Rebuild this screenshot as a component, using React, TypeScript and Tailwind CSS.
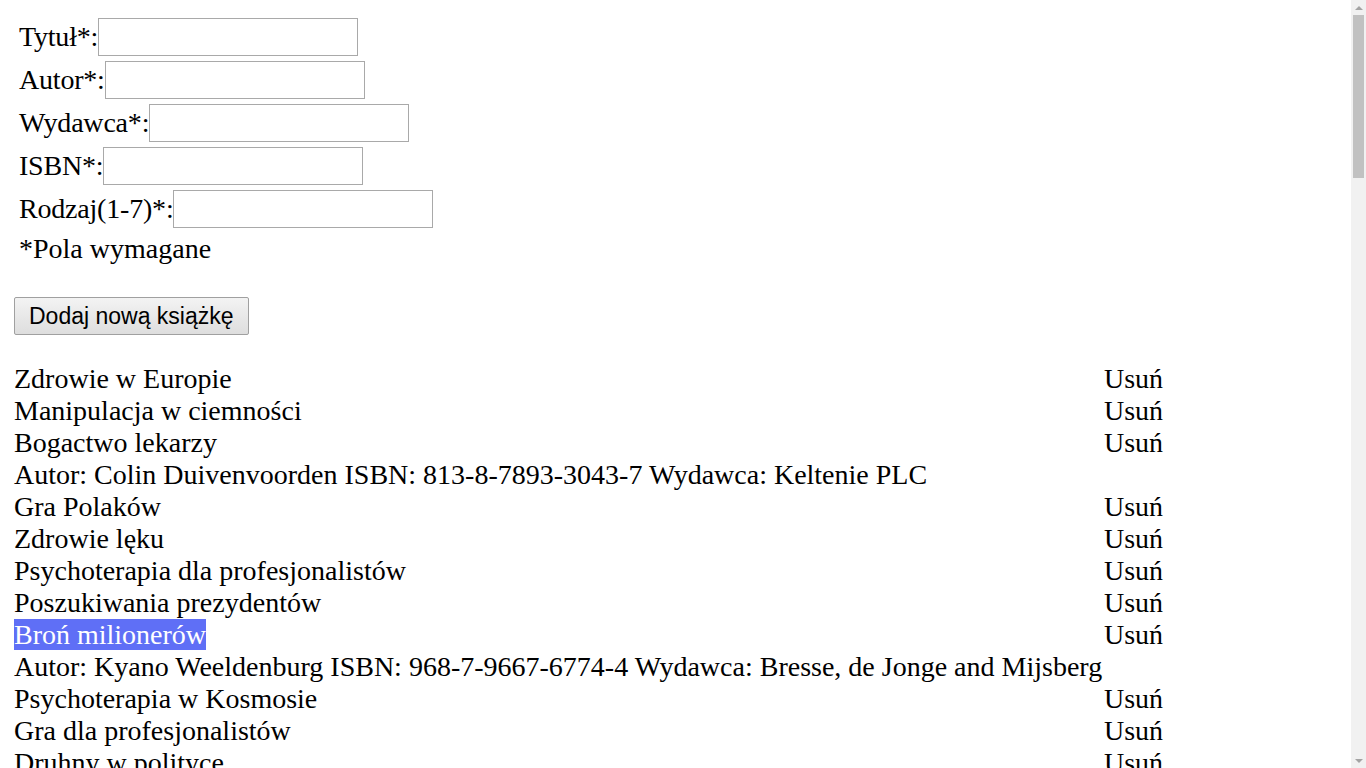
import React from "react";

type Row = { title: string; details?: string; selected?: boolean };

const rows: Row[] = [
  { title: "Zdrowie w Europie" },
  { title: "Manipulacja w ciemności" },
  { title: "Bogactwo lekarzy", details: "Autor: Colin Duivenvoorden ISBN: 813-8-7893-3043-7 Wydawca: Keltenie PLC" },
  { title: "Gra Polaków" },
  { title: "Zdrowie lęku" },
  { title: "Psychoterapia dla profesjonalistów" },
  { title: "Poszukiwania prezydentów" },
  { title: "Broń milionerów", selected: true, details: "Autor: Kyano Weeldenburg ISBN: 968-7-9667-6774-4 Wydawca: Bresse, de Jonge and Mijsberg" },
  { title: "Psychoterapia w Kosmosie" },
  { title: "Gra dla profesjonalistów" },
  { title: "Druhny w polityce" },
];

const extra = [
  "Sekrety lekarzy", "Historia Europy", "Manipulacja dla początkujących", "Zdrowie w Kosmosie",
  "Gra w ciemności", "Bogactwo Polaków", "Broń prezydentów", "Poszukiwania lęku",
  "Psychoterapia milionerów", "Druhny w Europie", "Tajemnice polityki", "Zdrowie dla profesjonalistów",
  "Manipulacja lekarzy", "Gra milionerów", "Bogactwo w Kosmosie", "Poszukiwania w ciemności",
  "Broń Polaków", "Historia lęku", "Sekrety prezydentów", "Druhny dla początkujących",
];

for (let i = 0; i < 85; i++) rows.push({ title: extra[i % extra.length] });

function Field({ label }: { label: string }) {
  return (
    <div className="flex h-[38px] items-center">
      <span className="tracking-[-0.2px]">{label}</span>
      <input className="h-[38px] w-[260px] border border-[#a9a9a9] bg-white outline-none" />
    </div>
  );
}

export default function App() {
  return (
    <div
      className="bg-white text-black text-[28px] leading-[32px] pr-[15px]"
      style={{ fontFamily: '"Liberation Serif", "Times New Roman", serif' }}
    >
      <div className="pl-[19px] pt-[18px] flex flex-col gap-[5px]">
        <Field label="Tytuł*:" />
        <Field label="Autor*:" />
        <Field label="Wydawca*:" />
        <Field label="ISBN*:" />
        <Field label="Rodzaj(1-7)*:" />
        <div>*Pola wymagane</div>
      </div>
      <div className="pl-[14px] pt-[32px]">
        <button
          className="h-[38px] px-[14px] border border-[#a0a0a0] rounded-[2px] bg-gradient-to-b from-[#f3f3f3] to-[#dedede] text-[23px] leading-none text-black"
          style={{ fontFamily: '"Liberation Sans", Arial, sans-serif' }}
        >
          Dodaj nową książkę
        </button>
      </div>
      <div className="pl-[14px] pt-[28px] pb-[8px] grid grid-cols-[1090px_auto]">
        {rows.map((r, i) => (
          <React.Fragment key={i}>
            <div className="whitespace-nowrap">
              {r.selected ? <span className="bg-[#5f6ff6] text-white">{r.title}</span> : r.title}
            </div>
            <div>Usuń</div>
            {r.details && (
              <>
                <div className="whitespace-nowrap">{r.details}</div>
                <div></div>
              </>
            )}
          </React.Fragment>
        ))}
      </div>
      <div className="fixed right-0 top-0 h-screen w-[15px] bg-[#f1f1f1] flex flex-col items-center">
        <div className="h-[15px] flex items-center justify-center">
          <div className="w-0 h-0 border-l-[4px] border-r-[4px] border-b-[4px] border-l-transparent border-r-transparent border-b-[#a3a3a3]" />
        </div>
        <div className="w-[11px] h-[163px] bg-[#c1c1c1]" />
        <div className="flex-1" />
        <div className="h-[15px] flex items-center justify-center">
          <div className="w-0 h-0 border-l-[4px] border-r-[4px] border-t-[4px] border-l-transparent border-r-transparent border-t-[#a3a3a3]" />
        </div>
      </div>
    </div>
  );
}
